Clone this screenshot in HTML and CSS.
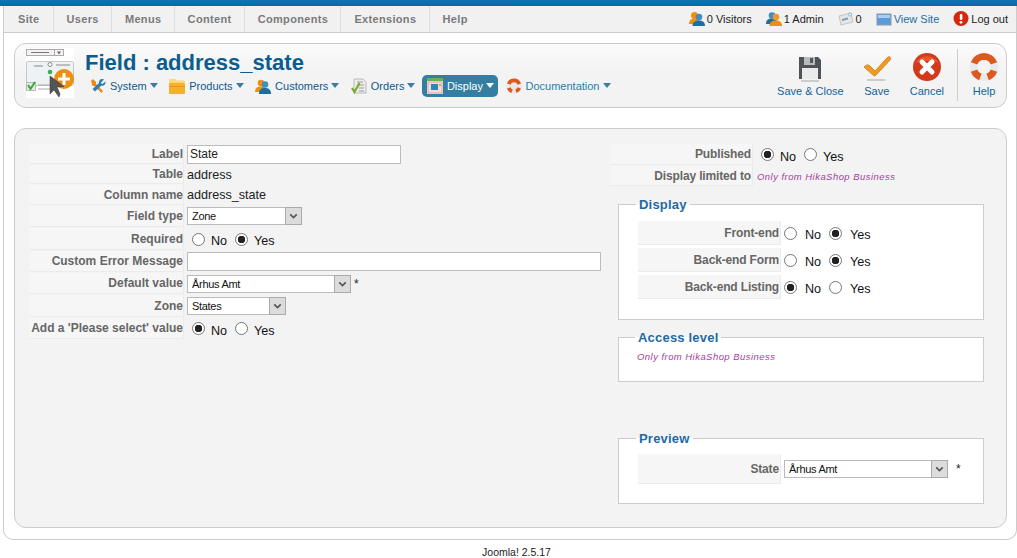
FILE: index.html
```html
<!DOCTYPE html>
<html lang="en">
<head>
<meta charset="utf-8">
<title>Field : address_state</title>
<link rel="stylesheet" href="styles.css">
</head>
<body>
<div class="topstripe"></div>
<div class="wrapper">
  <header class="navbar">
    <nav class="mainmenu">
      <a>Site</a><a>Users</a><a>Menus</a><a>Content</a><a>Components</a><a>Extensions</a><a>Help</a>
    </nav>
    <div class="status">
      <span class="stat"><svg class="i16" viewBox="0 0 16 16"><circle cx="5.500" cy="4.500" r="3.500" fill="#ee8f14"/><path d="M0 13c0-4 2-5.500 5.500-5.500s5 1.500 5 5.500z" fill="#ee8f14"/><circle cx="10" cy="6" r="3.300" fill="#3f8fc0"/><path d="M3.500 15c0-4 3-5.500 6.500-5.500s6 1.500 6 5.500z" fill="#1d6f9f"/></svg>0 Visitors</span>
      <span class="stat"><svg class="i16" viewBox="0 0 16 16"><circle cx="6" cy="4.500" r="3.300" fill="#3f8fc0"/><path d="M0 13c0-4 2-5.500 6-5.500s5 1.500 5 5.500z" fill="#1d6f9f"/><circle cx="10" cy="6" r="3.300" fill="#f19a22"/><path d="M3.500 15c0-4 3-5.500 6.500-5.500s6 1.500 6 5.500z" fill="#ee8f14"/></svg>1 Admin</span>
      <span class="stat"><svg class="i16" viewBox="0 0 16 16"><path d="M1 5l12-3 2 9-12 3z" fill="#e6e6e6" stroke="#c4c4c4"/><path d="M4 8l6-1.500v2l-6 1.500z" fill="#7a9cb8"/><circle cx="12" cy="3.500" r="1.500" fill="#fff" stroke="#6f98b8" stroke-width=".7"/></svg>0</span>
      <span class="stat link"><svg class="i16" viewBox="0 0 16 16"><rect x="1" y="3" width="14" height="11" fill="#5b9bd8" stroke="#8c9cab"/><rect x="2" y="4" width="12" height="3" fill="#a9d0f0"/></svg>View Site</span>
      <span class="stat"><svg class="i16" viewBox="0 0 16 16"><circle cx="8" cy="7.500" r="7.500" fill="#d3270f"/><rect x="6.800" y="3" width="2.600" height="6" rx="1" fill="#fff"/><circle cx="8" cy="11.300" r="1.400" fill="#fff"/></svg>Log out</span>
    </div>
  </header>

  <section class="toolbox">
    <svg class="fieldicon" viewBox="0 0 48 50">
      <rect width="48" height="50" fill="#fff"/>
      <rect x="0.500" y="1.500" width="37" height="6" fill="#f4f4f4" stroke="#aaa"/>
      <path d="M5 4.500h18" stroke="#777"/>
      <path d="M28.500 1.500v6" stroke="#aaa"/>
      <path d="M31 3.500h4l-2 3z" fill="#666"/>
      <rect x="0.500" y="13.500" width="47" height="24" rx="1" fill="#edf3f4" stroke="#c8c8c8"/>
      <path d="M8 18h9M30 17h14" stroke="#8a8a8a"/>
      <circle cx="24" cy="16.500" r="2" fill="#fff" stroke="#888"/>
      <circle cx="24" cy="24" r="2.300" fill="#35b34a"/>
      <rect x="0.500" y="34.500" width="9" height="8" fill="#dff0e0" stroke="#bbb"/>
      <path d="M2 37l2.500 4 4.500-7" fill="none" stroke="#3aa63a" stroke-width="2"/>
      <path d="M12 37h12M12 41h12" stroke="#aaa"/>
      <circle cx="38" cy="31" r="10" fill="#ee8f0f"/>
      <path d="M38 25v12M32 31h12" stroke="#fff" stroke-width="3"/>
      <path d="M24 28l0 18 4-4 5 7 1-3-3-7 7-.5z" fill="#555" stroke="#333" stroke-width=".5"/>
    </svg>
    <div class="headline">
      <h1>Field : address_state</h1>
      <ul class="submenu">
        <li><svg class="i16" viewBox="0 0 16 16"><path d="M1 3l2-2 3 3 0 2 7 7-1.500 2-7-7-2 0z" fill="#e98a15"/><path d="M14 1.500l-3 3 .5 1 1 .5 3-2.500c.5 2-1 5-4 4l-6.500 6-2.500-2.500 6.500-6c-.5-3 2-5 5-3.500z" fill="#2b7fb5"/></svg>System<i class="caret"></i></li>
        <li><svg class="i16" viewBox="0 0 16 16"><path d="M0 5V2.500C0 1.500.5 1 1.500 1h5L8 2.500h6.500c1 0 1.500.5 1.500 1.500v1z" fill="#fcd77f"/><rect y="5" width="16" height="11" rx="1" fill="#f6b02f"/><rect y="8" width="16" height="1" fill="#e8941b"/></svg>Products<i class="caret"></i></li>
        <li><svg class="i16" viewBox="0 0 16 16"><circle cx="6" cy="5" r="3.300" fill="#ee8f14"/><path d="M0 14c0-4 2-5.500 6-5.500s5 1.500 5 5.500z" fill="#ee8f14"/><circle cx="10" cy="6.500" r="3.300" fill="#3f8fc0"/><path d="M4 16c0-5 3-6 6-6s6 1 6 6z" fill="#1d6f9f"/></svg>Customers<i class="caret"></i></li>
        <li><svg class="i16" viewBox="0 0 16 16"><path d="M3 1h9l3 3v11H3z" fill="#eee" stroke="#aaa" stroke-width=".8"/><path d="M6 4h6M6 7h7M8 10h5M8 13h5" stroke="#999"/><path d="M1 10l2.500 4 5-9" fill="none" stroke="#7cab2d" stroke-width="2.200"/></svg>Orders<i class="caret"></i></li>
        <li class="active"><svg class="i16" viewBox="0 0 16 16"><rect width="16" height="16" fill="#e8e8e8"/><rect width="16" height="3" fill="#63b548"/><rect x="1" y="4" width="14" height="11" fill="#f3dcdc" stroke="#dc8c8c" stroke-width=".7"/><rect x="4" y="6" width="7" height="6" fill="#2a86c2"/><rect x="12" y="6" width="2" height="2" fill="#eea531"/></svg>Display<i class="caret"></i></li>
        <li class="doc"><svg class="i16" viewBox="1 0 30 30"><circle cx="16" cy="15" r="14.500" fill="#e9e9e9"/><path d="M6.130 11.410A10.500 10.500 0 0 1 25.870 11.410M6.130 18.590A10.500 10.500 0 0 0 12.410 24.870M19.590 24.870A10.500 10.500 0 0 0 25.870 18.590" fill="none" stroke="#dd5a1e" stroke-width="7"/></svg>Documentation<i class="caret"></i></li>
      </ul>
    </div>
    <div class="actions">
      <a class="action"><svg class="i32" viewBox="0 0 32 32"><path d="M5 5h19l3 3v19H5z" fill="#4f5256"/><rect x="10" y="5" width="11" height="8" fill="#b8bbbe"/><rect x="16" y="6" width="3" height="5" fill="#54575b"/><rect x="8" y="16" width="16" height="11" fill="#e9eaea"/><path d="M7 29h18" stroke="#ccc" stroke-width="2"/></svg>Save &amp; Close</a>
      <a class="action"><svg class="i32" viewBox="0 0 32 32"><path d="M3 15c2-2 4-3 6-1l5 5L27 5c2-1 3 1 2.500 2.500L15 23c-1 1-2 1-3 0z" fill="#ee9a25" stroke="#d9851a" stroke-linejoin="round"/><path d="M6 28h18" stroke="#ccc" stroke-width="2"/></svg>Save</a>
      <a class="action"><svg class="i32" viewBox="0 0 32 32"><circle cx="16" cy="15" r="14" fill="#d3391a"/><path d="M4 11a14 14 0 0 1 24 0c-6-3-18-3-24 0z" fill="#e45a30"/><path d="M11 10l10 10M21 10L11 20" stroke="#fff" stroke-width="5" stroke-linecap="round"/></svg>Cancel</a>
      <a class="action helpaction"><svg class="i32" viewBox="0 0 32 32"><circle cx="16" cy="15" r="14" fill="#e9e9e9"/><path d="M6.130 11.410A10.500 10.500 0 0 1 25.870 11.410M6.130 18.590A10.500 10.500 0 0 0 12.410 24.870M19.590 24.870A10.500 10.500 0 0 0 25.870 18.590" fill="none" stroke="#dd5a1e" stroke-width="7"/><circle cx="16" cy="15" r="7" fill="#f3f3f3"/></svg>Help</a>
    </div>
  </section>

  <main class="panel">
    <div class="col-left">
      <div class="row h20"><div class="key">Label</div><div class="val"><input class="text w214" type="text" value="State"></div></div>
      <div class="row h19"><div class="key">Table</div><div class="val">address</div></div>
      <div class="row h20"><div class="key">Column name</div><div class="val">address_state</div></div>
      <div class="row h21"><div class="key">Field type</div><div class="val raised"><span class="selectbox w115"><select class="sel"><option>Zone</option></select><svg class="arrow" viewBox="0 0 16 14"><path d="M4 5l4 4 4-4" fill="none" stroke="#555" stroke-width="2"/></svg></span></div></div>
      <div class="row h22"><div class="key">Required</div><div class="val radios"><input type="radio" name="req"><label>No</label><input type="radio" name="req" checked><label>Yes</label></div></div>
      <div class="row h21"><div class="key">Custom Error Message</div><div class="val"><input class="text w414" type="text"></div></div>
      <div class="row h21"><div class="key">Default value</div><div class="val"><span class="selectbox w164"><select class="sel"><option>Århus Amt</option></select><svg class="arrow" viewBox="0 0 16 14"><path d="M4 5l4 4 4-4" fill="none" stroke="#555" stroke-width="2"/></svg></span><span class="star">*</span></div></div>
      <div class="row h22"><div class="key">Zone</div><div class="val"><span class="selectbox w99"><select class="sel"><option>States</option></select><svg class="arrow" viewBox="0 0 16 14"><path d="M4 5l4 4 4-4" fill="none" stroke="#555" stroke-width="2"/></svg></span></div></div>
      <div class="row h21"><div class="key">Add a 'Please select' value</div><div class="val radios"><input type="radio" name="add" checked><label>No</label><input type="radio" name="add"><label>Yes</label></div></div>
    </div>
    <div class="col-right">
      <div class="row h21 wide"><div class="key">Published</div><div class="val radios"><input type="radio" name="pub" checked><label>No</label><input type="radio" name="pub"><label>Yes</label></div></div>
      <div class="row h20 wide"><div class="key">Display limited to</div><div class="val"><span class="business">Only from HikaShop Business</span></div></div>

      <fieldset class="box box-display">
        <legend>Display</legend>
        <div class="row h24"><div class="key">Front-end</div><div class="val radios roomy"><input type="radio" name="fe"><label>No</label><input type="radio" name="fe" checked><label>Yes</label></div></div>
        <div class="row h24"><div class="key">Back-end Form</div><div class="val radios roomy"><input type="radio" name="bf"><label>No</label><input type="radio" name="bf" checked><label>Yes</label></div></div>
        <div class="row h24"><div class="key">Back-end Listing</div><div class="val radios roomy"><input type="radio" name="bl" checked><label>No</label><input type="radio" name="bl"><label>Yes</label></div></div>
      </fieldset>

      <fieldset class="box box-access">
        <legend>Access level</legend>
        <span class="business">Only from HikaShop Business</span>
      </fieldset>

      <fieldset class="box box-preview">
        <legend>Preview</legend>
        <div class="row h30"><div class="key">State</div><div class="val"><span class="selectbox w164"><select class="sel"><option>Århus Amt</option></select><svg class="arrow" viewBox="0 0 16 14"><path d="M4 5l4 4 4-4" fill="none" stroke="#555" stroke-width="2"/></svg></span><span class="star far">*</span></div></div>
      </fieldset>
    </div>
  </main>
</div>
<footer class="foot">Joomla! 2.5.17</footer>
</body>
</html>
```
FILE: styles.css
```css
* { box-sizing: border-box; }
html, body { margin: 0; padding: 0; }
body {
  font-family: "Liberation Sans", Arial, sans-serif;
  font-size: 12px;
  color: #222;
  background: #fff;
  overflow: hidden;
}
.topstripe {
  height: 6px;
  background: linear-gradient(#0f76ad, #0b6aa1);
}
.wrapper {
  margin-left: 3px;
  height: 534px;
  padding: 0 9px 0 10px;
  border: 1px solid #ccc;
  border-top: 0;
  border-radius: 0 0 10px 10px;
  background: #fff;
}
.navbar {
  display: flex;
  justify-content: space-between;
  align-items: stretch;
  height: 27px;
  margin: 0 -9px 0 -10px;
  background: #f1f1f1;
  border-bottom: 1px solid #ccc;
}
.mainmenu { display: flex; }
.mainmenu a {
  display: flex;
  align-items: center;
  padding: 0 13px 0 14px;
  font-weight: bold;
  font-size: 11px;
  letter-spacing: .33px;
  color: #7a7a7a;
  border-right: 1px solid #ddd;
}
.mainmenu a + a { padding-left: 13px; padding-right: 12.200px; }
.mainmenu a:last-child { border-right: 0; }
.status {
  display: flex;
  align-items: center;
  gap: 14px;
  padding-right: 8px;
  font-size: 11px;
  color: #222;
}
.stat { display: flex; align-items: center; gap: 2px; }
.stat.link { color: #1d6fa5; }
.i16 { width: 16px; height: 16px; flex: none; }
.i32 { width: 32px; height: 32px; flex: none; }

.toolbox {
  display: flex;
  align-items: flex-start;
  height: 65px;
  margin-top: 10px;
  padding-left: 11px;
  border: 1px solid #ccc;
  border-radius: 12px;
  background: linear-gradient(#fbfbfb, #f3f3f3 45%);
}
.fieldicon { width: 48px; height: 50px; margin-top: 4px; flex: none; }
.headline { margin-left: 11px; flex: 1; }
h1 {
  margin: 5px 0 0;
  font-size: 22px;
  line-height: 27px;
  font-weight: bold;
  color: #0b5d8f;
}
.submenu {
  display: flex;
  gap: 2.500px;
  list-style: none;
  margin: -1px 0 0;
  padding: 0;
}
.submenu li {
  display: flex;
  align-items: center;
  gap: 4px;
  height: 22px;
  padding: 0 4px 1px 5px;
  font-size: 11px;
  color: #11588e;
  border-radius: 5px;
}
.submenu li.active { background: #357ea3; color: #fff; }
.submenu li.doc { color: #2a7bab; }
.caret {
  width: 0;
  height: 0;
  margin-left: -1px;
  border-left: 4px solid transparent;
  border-right: 4px solid transparent;
  border-top: 5px solid #3a7ca5;
}
.active .caret { border-top-color: #fff; }
.actions {
  display: flex;
  align-items: stretch;
  height: 52px;
  margin-top: 5px;
  padding-right: 6px;
  font-size: 11px;
}
.action {
  display: flex;
  flex-direction: column;
  align-items: center;
  justify-content: flex-start;
  padding: 0 8.500px;
  color: #11649c;
  line-height: 14px;
}
.action .i32 { margin-top: 3px; }
.helpaction {
  margin-left: 4.500px;
  padding: 0 0 0 10px;
  border-left: 1px solid #ccc;
}

.panel {
  display: flex;
  height: 400px;
  margin-top: 20px;
  padding: 15px 22px 0 15px;
  background: #f3f3f3;
  border: 1px solid #ccc;
  border-radius: 12px;
}
.col-left {
  display: flex;
  flex-direction: column;
  gap: 1px;
  width: 580px;
  flex: none;
}
.col-right {
  display: flex;
  flex-direction: column;
  gap: 1px;
  flex: 1;
}
.row { display: flex; align-items: stretch; }
.h19 { height: 19px; }
.h20 { height: 20px; }
.h21 { height: 21px; }
.h22 { height: 22px; }
.h24 { height: 24px; }
.h30 { height: 30px; }
.key {
  display: flex;
  align-items: center;
  justify-content: flex-end;
  width: 154px;
  flex: none;
  padding-right: 0;
  font-weight: bold;
  color: #666;
  background: #f6f6f6;
  border-right: 1px solid #ebebeb;
  border-bottom: 1px solid #ebebeb;
  white-space: nowrap;
}
.col-right .key { letter-spacing: -.15px; }
.wide .key { width: 143px; padding-right: 1px; }
.box .key { width: 143px; padding-right: 1px; }
.val {
  display: flex;
  align-items: center;
  padding-left: 3px;
  font-size: 12.600px;
  color: #222;
}
.val.raised { padding-bottom: 2px; }
.wide .val { padding-left: 3px; }
.radios input {
  appearance: none;
  width: 13px;
  height: 13px;
  margin: 0 6px 0 5px;
  border: 1px solid #777;
  border-radius: 50%;
  background: #fff;
}
.radios input:checked {
  background: radial-gradient(circle, #222 0 3.5px, #fff 4px);
}
.radios label { margin: 4px 3px 0 0; color: #111; }
.roomy input { margin: 0 8px 0 0; }
.roomy label { margin-right: 8px; }
.text {
  height: 19px;
  padding: 0 2px;
  font: 12px "Liberation Sans", Arial, sans-serif;
  color: #222;
  background: #fff;
  border: 1px solid #bbb;
  outline: 0;
}
.w214 { width: 214px; }
.w414 { width: 414px; }
.selectbox { position: relative; display: block; height: 18px; }
.w115 { width: 115px; }
.w164 { width: 164px; }
.w99 { width: 99px; }
.sel {
  appearance: none;
  display: block;
  width: 100%;
  height: 100%;
  padding: 0 0 0 4px;
  font: 11px "Liberation Sans", Arial, sans-serif;
  letter-spacing: -.3px;
  color: #111;
  background: #fff;
  border: 1px solid #bbb;
  border-radius: 0;
}
.arrow {
  position: absolute;
  top: 0;
  right: 0;
  width: 17px;
  height: 18px;
  padding: 1px 1px;
  background: #dcdcdc;
  border: 1px solid #aaa;
}
.star { margin-left: 3px; font-size: 12px; }
.star.far { margin-left: 8px; color: #222; }
.business {
  font-size: 9.500px;
  font-style: italic;
  letter-spacing: .45px;
  color: #a93ba0;
}
.wide .business { margin-left: 1px; }
.box {
  margin: 0 0 0 8px;
  width: 366px;
  padding: 0 0 0 19px;
  background: #fff;
  border: 1px solid #ccc;
  min-width: 0;
}
.box legend {
  margin-left: -2px;
  padding: 2px 3px 0;
  font-size: 13px;
  letter-spacing: .2px;
  line-height: 16px;
  font-weight: bold;
  color: #1d6aa5;
}
.box .row + .row { margin-top: 3px; }
.box-display { margin-top: 8px; padding-top: 8px; padding-bottom: 20px; }
.box-access { margin-top: 7px; height: 54px; padding-left: 18px; padding-top: 5px; }
.box-access .business { display: block; }
.box-preview { margin-top: 46px; padding-top: 7px; padding-bottom: 19px; }
.foot {
  margin-top: 6px;
  padding-left: 16px;
  text-align: center;
  font-size: 10.500px;
  line-height: 12px;
  color: #222;
}
```
